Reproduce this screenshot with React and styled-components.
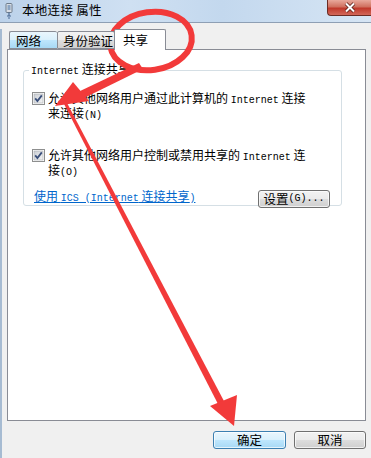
import styled, { createGlobalStyle } from "styled-components"

const GlobalStyle = createGlobalStyle`
  html, body {
    margin: 0;
    padding: 0;
    overflow: hidden;
    background: #f0f0f0;
  }
`

const cjk = `"Noto Sans CJK SC", "Liberation Sans", sans-serif`

const Window = styled.div`
  position: relative;
  width: 371px;
  height: 458px;
  overflow: hidden;
  font-family: ${cjk};
  font-size: 12px;
  color: #000;
  background: #f0f0f0;
`

const TitleBar = styled.div`
  height: 22px;
  display: flex;
  align-items: flex-start;
  background: linear-gradient(90deg, #bcd2ea 0%, #cfe0f2 35%, #c3d8ee 60%, #d6e5f4 100%);
  border-bottom: 1px solid #8e9fb4;
`

const AppIcon = styled.svg`
  width: 10px;
  height: 16px;
  margin: 3px 8px 0 4px;
  flex: none;
`

const Title = styled.div`
  line-height: 20px;
  font-size: 12.5px;
  letter-spacing: 0.3px;
`

const CloseButton = styled.div`
  margin-left: auto;
  width: 43px;
  height: 15px;
  border-radius: 0 0 0 4px;
  border: 1px solid #6b2c24;
  border-top: none;
  border-right: none;
  background: linear-gradient(180deg, #e8a99c 0%, #d0705f 45%, #c0392b 55%, #d2685a 100%);
  display: flex;
  justify-content: center;
  align-items: center;
`

const Body = styled.div`
  border-left: 2px solid #a6bbd2;
  padding: 0 5px 0 5px;
  height: 435px;
`

const TabRow = styled.div`
  display: flex;
  align-items: flex-end;
  height: 21px;
  margin-top: 6px;
  padding-left: 2px;
  position: relative;
  z-index: 1;
  margin-bottom: -1px;
`

const Tab = styled.div`
  height: ${(p) => (p.$active ? "21px" : "18px")};
  box-sizing: border-box;
  width: ${(p) => p.$w}px;
  margin: ${(p) => (p.$active ? "0 0 0 -1px" : "0 0 1px 0")};
  padding-left: ${(p) => p.$pad}px;
  line-height: ${(p) => (p.$active ? "19px" : "17px")};
  border: 1px solid #898c95;
  border-bottom: ${(p) => (p.$active ? "none" : "1px solid #898c95")};
  border-right: ${(p) => (p.$first ? "none" : "1px solid #898c95")};
  border-radius: 2px 2px 0 0;
  background: ${(p) =>
    p.$active
      ? "#fff"
      : p.$hover
      ? "linear-gradient(180deg, #eaf6fd 0%, #d9f0fc 50%, #bee6fd 51%, #a7d9f5 100%)"
      : "linear-gradient(180deg, #f2f2f2 0%, #ebebeb 50%, #dddddd 51%, #cfcfcf 100%)"};
  font-size: 12.5px;
  white-space: nowrap;
  overflow: hidden;
`

const Panel = styled.div`
  height: 372px;
  box-sizing: border-box;
  background: #fff;
  border: 1px solid #898c95;
  padding: 12px 0 0 15px;
`

const GroupBox = styled.fieldset`
  margin: 0;
  width: 319px;
  height: 144px;
  box-sizing: border-box;
  border: 1px solid #d5dfe5;
  border-radius: 3px;
  padding: 0 0 0 8px;
  display: flex;
  flex-direction: column;
`

const Legend = styled.legend`
  padding: 0 2px;
  margin-left: -3px;
  line-height: 14px;
  font-size: 12px;
`

const Lat = styled.span`
  font-family: "Liberation Mono", "DejaVu Sans Mono", monospace;
  font-size: 10px;
`

const CheckRow = styled.div`
  display: flex;
  align-items: flex-start;
  margin-top: ${(p) => p.$top}px;
`

const Box = styled.svg`
  width: 13px;
  height: 13px;
  flex: none;
  margin-right: 3px;
`

const Label = styled.div`
  line-height: 12px;
  font-size: 12px;
`

const LinkRow = styled.div`
  display: flex;
  justify-content: space-between;
  align-items: flex-start;
  margin-top: 11px;
  padding-left: 2px;
  padding-right: 11px;
`

const Link = styled.a`
  color: #0066cc;
  text-decoration: underline;
  line-height: 12px;
  font-size: 12px;
  cursor: pointer;
`

const Button = styled.div`
  width: ${(p) => p.$w}px;
  height: 18px;
  box-sizing: border-box;
  border: 1px solid ${(p) => (p.$primary ? "#3c7fb1" : "#707070")};
  border-radius: 3px;
  background: ${(p) =>
    p.$primary
      ? "linear-gradient(180deg, #eaf6fd 0%, #d9f0fc 50%, #bee6fd 51%, #a7d9f5 100%)"
      : "linear-gradient(180deg, #f2f2f2 0%, #ebebeb 50%, #dddddd 51%, #cfcfcf 100%)"};
  box-shadow: inset 0 0 0 1px rgba(255, 255, 255, 0.7);
  display: flex;
  justify-content: center;
  align-items: center;
  font-size: 12.5px;
  line-height: 16px;
`

const Footer = styled.div`
  display: flex;
  justify-content: flex-end;
  gap: 8px;
  margin-top: 10px;
`

const Annotation = styled.svg`
  position: absolute;
  left: 0;
  top: 0;
  width: 371px;
  height: 458px;
  pointer-events: none;
`

const CheckBox = () => (
  <Box viewBox="0 0 13 13">
    <defs>
      <linearGradient id="cbg" x1="0" y1="0" x2="1" y2="1">
        <stop offset="0" stopColor="#cbcfd5" />
        <stop offset="1" stopColor="#f4f4f4" />
      </linearGradient>
    </defs>
    <rect x="0.5" y="0.5" width="12" height="12" fill="#fff" stroke="#8e8f8f" />
    <rect x="2" y="2" width="9" height="9" fill="url(#cbg)" stroke="#a9abae" strokeWidth="0.6" />
    <path d="M3.2 6.4 L5.4 9 L9.8 3.4" fill="none" stroke="#3a4f7a" strokeWidth="1.8" />
  </Box>
)

const App = () => {
  return (
    <Window>
      <GlobalStyle />
      <TitleBar>
        <AppIcon viewBox="0 0 10 16">
          <rect x="2" y="0.5" width="6" height="9" rx="1" fill="#d9dee5" stroke="#6e7c8c" />
          <rect x="3.5" y="2" width="3" height="5" fill="#8aa4c2" />
          <path d="M5 9.5 V13 M3 13 H7 M4 15 H6" stroke="#4b6a93" strokeWidth="1.2" />
        </AppIcon>
        <Title>本地连接 属性</Title>
        <CloseButton>
          <svg width="14" height="11" viewBox="0 0 14 11">
            <path d="M3 1.5 L11 9.5 M11 1.5 L3 9.5" stroke="#5a1f18" strokeWidth="3.6" />
            <path d="M3 1.5 L11 9.5 M11 1.5 L3 9.5" stroke="#fff" strokeWidth="2" />
          </svg>
        </CloseButton>
      </TitleBar>
      <Body>
        <TabRow>
          <Tab $w={48} $pad={6} $hover $first>网络</Tab>
          <Tab $w={58} $pad={5}>身份验证</Tab>
          <Tab $w={52} $pad={8} $active>共享</Tab>
        </TabRow>
        <Panel>
          <GroupBox>
            <Legend>
              <Lat>Internet</Lat> 连接共享
            </Legend>
            <CheckRow $top={13}>
              <CheckBox />
              <Label>
                允许其他网络用户通过此计算机的 <Lat>Internet</Lat> 连接
                <br />
                来连接<Lat>(N)</Lat>
              </Label>
            </CheckRow>
            <CheckRow $top={27}>
              <CheckBox />
              <Label>
                允许其他网络用户控制或禁用共享的 <Lat>Internet</Lat> 连
                <br />
                接<Lat>(O)</Lat>
              </Label>
            </CheckRow>
            <LinkRow>
              <Link>
                使用 <Lat>ICS (Internet</Lat> 连接共享<Lat>)</Lat>
              </Link>
              <Button $w={72}>
                设置<Lat>(G)...</Lat>
              </Button>
            </LinkRow>
          </GroupBox>
        </Panel>
        <Footer>
          <Button $w={73} $primary>确定</Button>
          <Button $w={72}>取消</Button>
        </Footer>
      </Body>
      <Annotation viewBox="0 0 371 458">
        <g fill="#f23a3a" stroke="none">
          <ellipse
            cx="151"
            cy="41"
            rx="41"
            ry="29"
            fill="none"
            stroke="#f23a3a"
            strokeWidth="6"
            transform="rotate(-8 151 41)"
          />
          <polygon points="139,63 143,69 82,99 78,92" />
          <polygon points="55,106 73,82 89,101" />
          <polygon points="63,102 66,101 225,403 219,406" />
          <polygon points="210,406 237,395 234,426" />
        </g>
      </Annotation>
    </Window>
  )
}

export default App
